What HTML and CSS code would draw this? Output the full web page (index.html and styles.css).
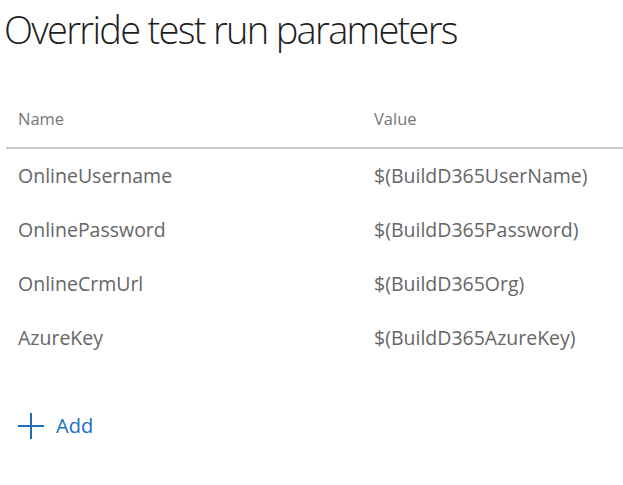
FILE: index.html
```html
<!DOCTYPE html>
<html>
<head>
<meta charset="utf-8">
<link rel="stylesheet" href="styles.css">
</head>
<body>
<div class="page">
  <h1 class="title">Override test run parameters</h1>
  <div class="grid">
    <div class="row head">
      <div class="cell">Name</div>
      <div class="cell">Value</div>
    </div>
    <div class="row">
      <div class="cell">OnlineUsername</div>
      <div class="cell">$(BuildD365UserName)</div>
    </div>
    <div class="row">
      <div class="cell">OnlinePassword</div>
      <div class="cell">$(BuildD365Password)</div>
    </div>
    <div class="row">
      <div class="cell">OnlineCrmUrl</div>
      <div class="cell">$(BuildD365Org)</div>
    </div>
    <div class="row">
      <div class="cell">AzureKey</div>
      <div class="cell">$(BuildD365AzureKey)</div>
    </div>
  </div>
  <div class="add">
    <svg class="plus" width="26" height="26" viewBox="0 0 26 26"><path d="M13 0V26M0 13H26" stroke="#1a6fbf" stroke-width="2" fill="none"/></svg>
    <span class="add-label">Add</span>
  </div>
</div>
</body>
</html>
```

FILE: styles.css
```css
html, body {
  margin: 0;
  padding: 0;
  background: #ffffff;
}
.page {
  width: 623px;
  height: 485px;
  font-family: "Open Sans", "Noto Sans", sans-serif;
  overflow: hidden;
}
.title {
  margin: 0;
  padding: 0 0 0 4px;
  font-weight: 300;
  font-size: 38px;
  line-height: 58px;
  color: #1e1e1e;
  letter-spacing: -1.7px;
}
.grid {
  margin: 39px 0 0 6px;
}
.row {
  display: grid;
  grid-template-columns: 356px 1fr;
  height: 54px;
  box-sizing: border-box;
  padding-bottom: 2px;
  align-items: center;
  font-size: 19.5px;
  color: #666666;
}
.row .cell {
  padding-left: 12px;
}
.row.head {
  height: 52px;
  padding-bottom: 8px;
  font-size: 16.5px;
  color: #767676;
  border-bottom: 2px solid #c8c8c8;
}
.add {
  display: flex;
  align-items: center;
  gap: 12px;
  margin: 47px 0 0 18px;
}
.add-label {
  font-size: 20px;
  color: #1a6fbf;
}
```
